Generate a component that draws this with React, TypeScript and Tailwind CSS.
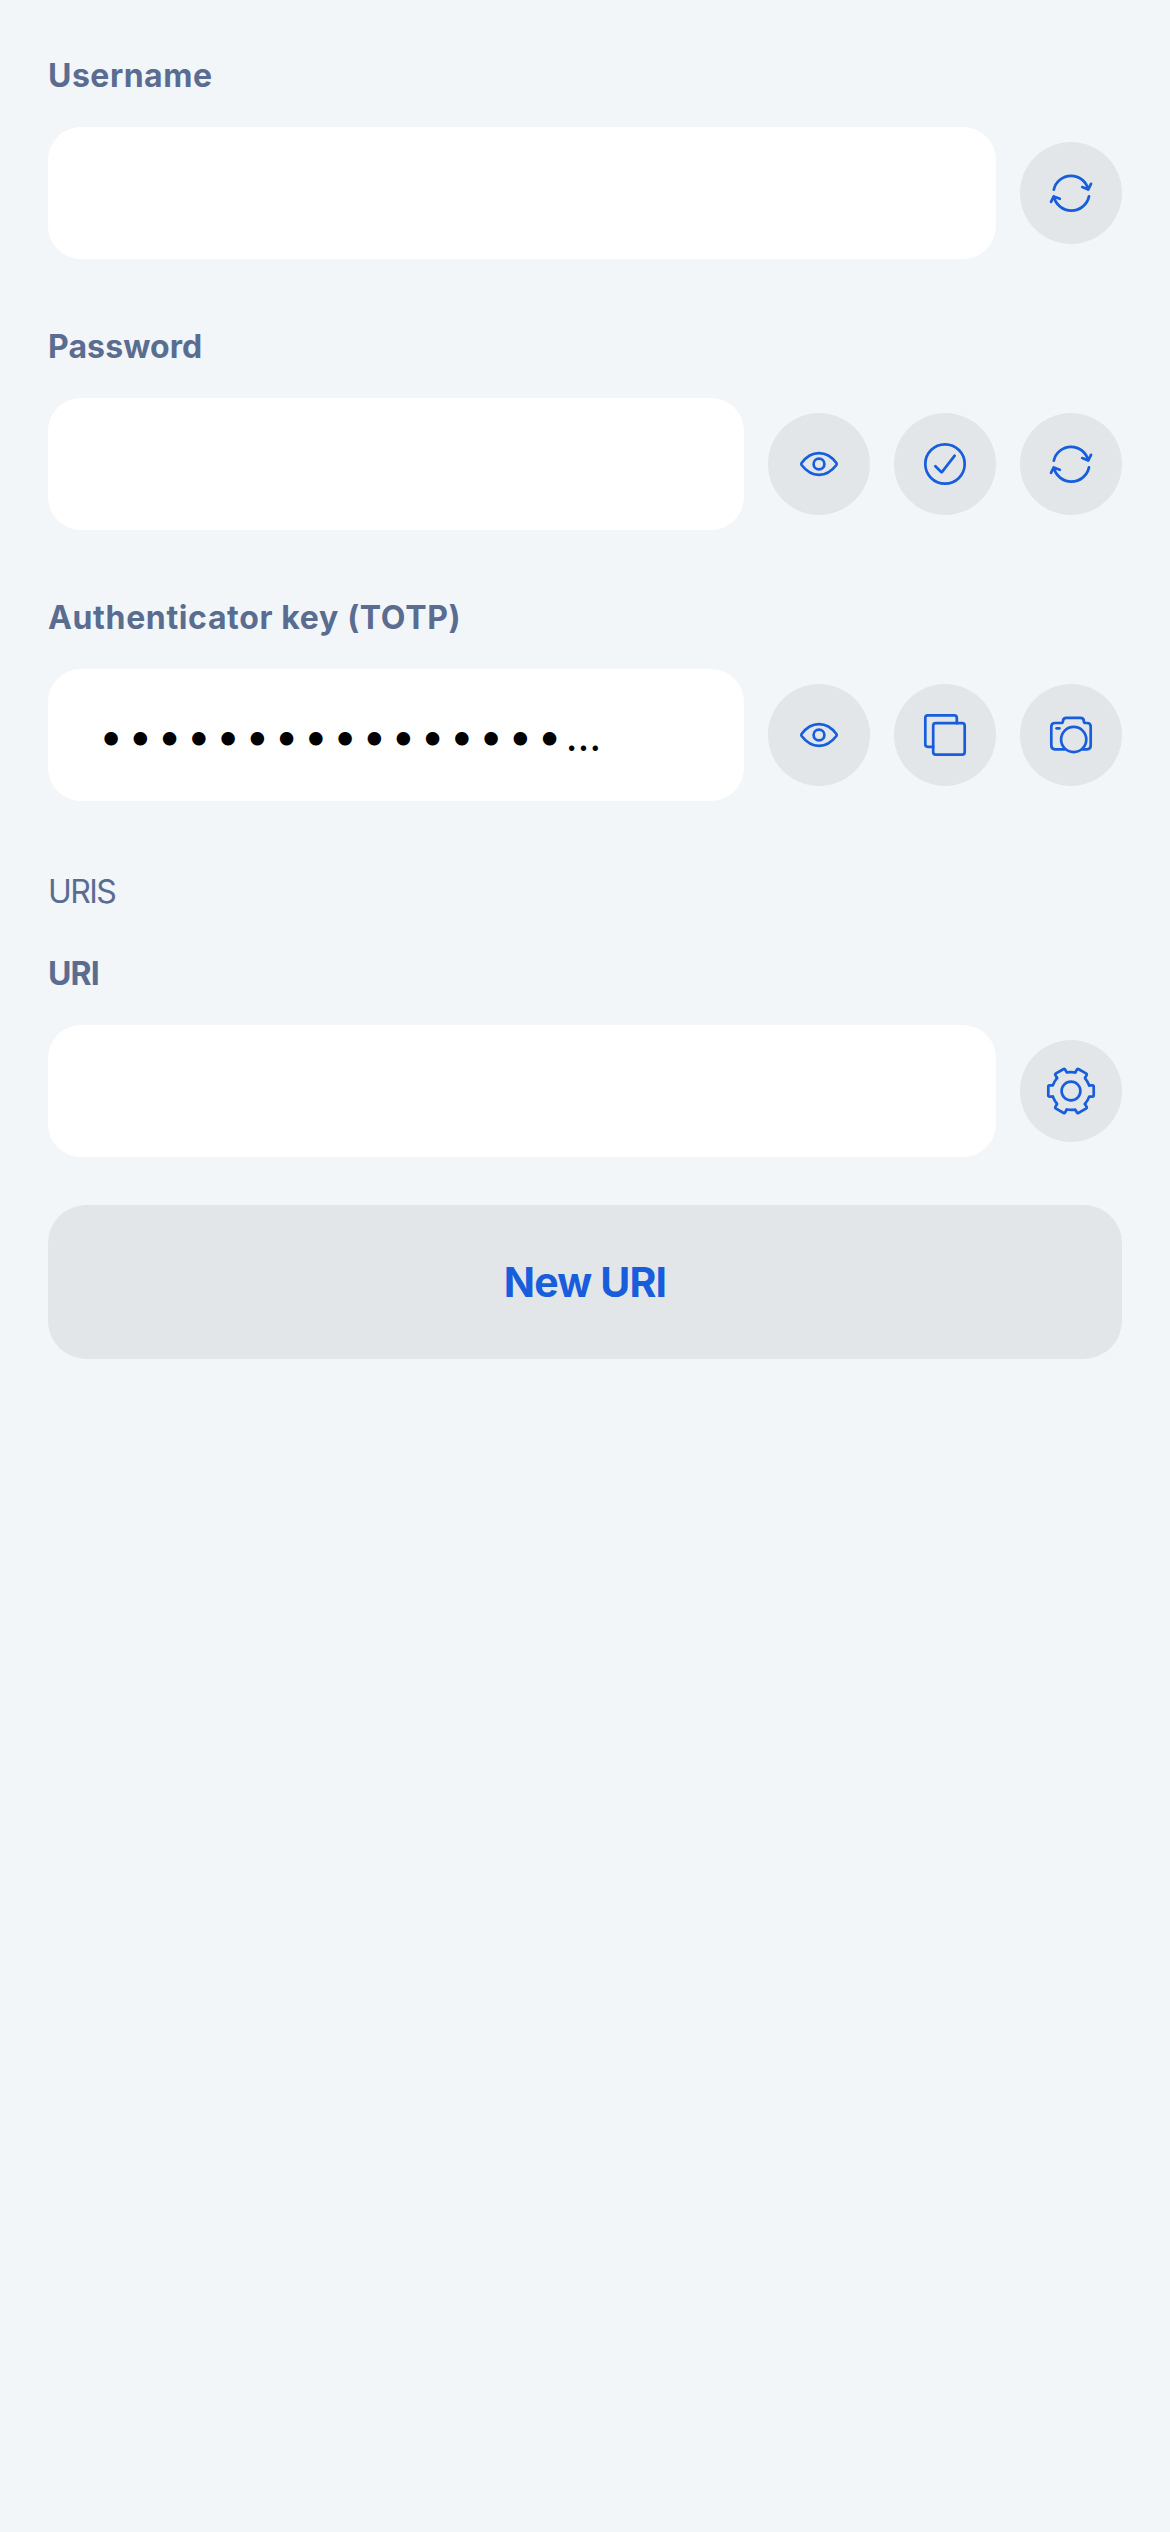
import type { ReactNode } from "react";

function Icon({ children }: { children: ReactNode }) {
  return (
    <svg
      viewBox="-30 -30 60 60"
      className="size-[60px]"
      fill="none"
      stroke="#175ddc"
      strokeWidth={2.7}
      strokeLinecap="round"
      strokeLinejoin="round"
    >
      {children}
    </svg>
  );
}

function RefreshIcon() {
  return (
    <Icon>
      <path d="M-17.2 -3.3A17.6 17.6 0 0 1 17.2 -3.4M11.2 -5.9L17.3 -3.5L20 -9.2" />
      <path d="M18 3.4A18 18 0 0 1 -17.2 3.4M-11.2 5.8L-17.3 3.4L-20 8.9" />
    </Icon>
  );
}

function EyeIcon() {
  return (
    <Icon>
      <path d="M-17.4 -1C-13 -6.8 -7 -10.8 0 -10.8S13 -6.8 17.4 -1Q18.1 0 17.4 1C13 6.8 7 10.8 0 10.8S-13 6.8 -17.4 1Q-18.1 0 -17.4 -1Z" />
      <circle r={5.4} />
    </Icon>
  );
}

function CheckIcon() {
  return (
    <Icon>
      <circle r={19.7} />
      <path d="M-9.6 2.3L-3.8 8Q-3.3 8.3 -2.9 7.8L9.7 -8.3" />
    </Icon>
  );
}

function CopyIcon() {
  return (
    <Icon>
      <path d="M11.8 -11.8V-17.2Q11.8 -19.7 9.3 -19.7H-17.2Q-19.7 -19.7 -19.7 -17.2V9.3Q-19.7 11.8 -17.2 11.8H-11.8" />
      <rect x={-11.8} y={-11.8} width={31.5} height={31.5} rx={2.6} />
    </Icon>
  );
}

function CameraIcon() {
  return (
    <Icon>
      <path d="M-6.5 14.4H-16Q-19.7 14.4 -19.7 10.6V-8.2Q-19.7 -12 -16 -12H-10Q-8 -12 -8 -14Q-8 -17.2 -4.6 -17.2H9.4Q12.8 -17.2 12.8 -14Q12.8 -12 14.8 -12H16Q19.7 -12 19.7 -8.2V10.6Q19.7 14.4 16 14.4H11.5" />
      <circle cx={2.7} cy={4.5} r={12.6} />
      <path d="M-14.4 -6.7H-11.6" />
    </Icon>
  );
}

function GearIcon() {
  return (
    <Icon>
      <circle r={9.4} />
      {[0, 60, 120, 180, 240, 300].map((angle) => (
        <path
          key={angle}
          transform={`rotate(${angle})`}
          d="M18.2 -5.6H21.3Q22.7 -5.6 22.7 -4.2V4.2Q22.7 5.6 21.3 5.6H18.2Q16.8 9.5 13.9 13"
        />
      ))}
    </Icon>
  );
}

function IconButton({ label, children }: { label: string; children: ReactNode }) {
  return (
    <button
      aria-label={label}
      className="flex size-[102px] shrink-0 items-center justify-center rounded-full bg-[#e2e6e9]"
    >
      {children}
    </button>
  );
}

function Field({
  label,
  labelClass,
  value,
  children,
}: {
  label: string;
  labelClass: string;
  value?: ReactNode;
  children: ReactNode;
}) {
  return (
    <div>
      <div className={`h-10 text-[32px] leading-10 font-[650] whitespace-nowrap ${labelClass}`}>{label}</div>
      <div className="mt-[31px] flex items-center gap-6">
        <div className="flex h-[132px] min-w-0 flex-1 items-center overflow-hidden rounded-[33px] bg-white px-[51px] text-black">
          {value}
        </div>
        {children}
      </div>
    </div>
  );
}

export default function App() {
  return (
    <main className="min-h-[2532px] w-[1170px] bg-[#f2f6f9] px-12 pt-14 font-['Inter',sans-serif] text-[#5a6d91]">
      <div className="flex flex-col gap-[68px]">
        <Field label="Username" labelClass="tracking-[0.5px]">
          <IconButton label="Generate username">
            <RefreshIcon />
          </IconButton>
        </Field>
        <Field label="Password" labelClass="tracking-[0.1px]">
          <IconButton label="Show password">
            <EyeIcon />
          </IconButton>
          <IconButton label="Check password">
            <CheckIcon />
          </IconButton>
          <IconButton label="Generate password">
            <RefreshIcon />
          </IconButton>
        </Field>
        <Field
          label="Authenticator key (TOTP)"
          labelClass="tracking-[0.65px]"
          value={
            <span className="flex items-baseline whitespace-nowrap">
              <span className="text-[43px] tracking-[5.05px]">••••••••••••••••</span>
              <span className="-ml-[1px] text-[41px]">…</span>
            </span>
          }
        >
          <IconButton label="Show key">
            <EyeIcon />
          </IconButton>
          <IconButton label="Copy key">
            <CopyIcon />
          </IconButton>
          <IconButton label="Scan code">
            <CameraIcon />
          </IconButton>
        </Field>
      </div>
      <h2 className="mt-[71px] h-10 text-[32px] leading-10 font-normal tracking-[-1.6px]">URIS</h2>
      <div className="mt-[42px]">
        <Field label="URI" labelClass="tracking-[-0.9px]">
          <IconButton label="URI options">
            <GearIcon />
          </IconButton>
        </Field>
      </div>
      <button className="mt-12 flex h-[154px] w-full items-center justify-center rounded-[38px] bg-[#e2e6e9] pt-0.5 text-[41px] font-[650] tracking-[-0.8px] text-[#175ddc]">
        New URI
      </button>
    </main>
  );
}
